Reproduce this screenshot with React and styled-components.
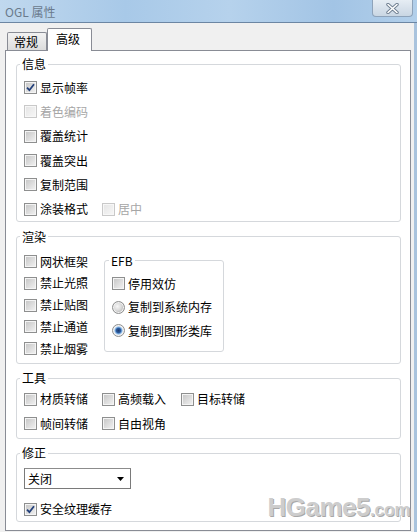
import React from 'react';
import styled, { createGlobalStyle } from 'styled-components';

const GlobalStyle = createGlobalStyle`
  html, body {
    margin: 0;
    padding: 0;
    background: #f0f0f0;
  }
  body {
    font-family: "Noto Sans CJK SC", "Noto Sans", sans-serif;
    font-size: 12px;
    color: #000;
  }
`;

const Window = styled.div`
  width: 417px;
  height: 532px;
  overflow: hidden;
  display: flex;
  flex-direction: column;
  background: #f0f0f0;
`;

const TitleBar = styled.div`
  height: 23px;
  flex: none;
  box-sizing: border-box;
  display: flex;
  justify-content: space-between;
  align-items: flex-start;
  padding-right: 4px;
  background: linear-gradient(to right, #c0d8ee 0%, #a8c9e8 30%, #b6d2ec 55%, #a2c4e5 80%, #b2cfea 100%);
  border-bottom: 1px solid #6c86a3;
`;

const Caption = styled.span`
  padding: 4px 0 0 5px;
  line-height: 15px;
  font-size: 12px;
  color: #6a7a8c;
  font-family: "Noto Sans CJK SC", "Noto Sans", sans-serif;
`;

const CloseButton = styled.div`
  width: 41px;
  height: 17px;
  box-sizing: border-box;
  display: flex;
  align-items: center;
  justify-content: center;
  border: 1px solid #8ea3ba;
  border-top: none;
  border-radius: 0 0 4px 4px;
  background: linear-gradient(to bottom, #e6edf4, #c9d6e3);
`;

const Body = styled.div`
  flex: 1;
  display: flex;
  flex-direction: column;
  border-right: 3px solid #a9c3dd;
`;

const TabRow = styled.div`
  display: flex;
  align-items: flex-end;
  padding: 5px 0 0 7px;
  position: relative;
  z-index: 1;
`;

const Tab = styled.div`
  box-sizing: border-box;
  width: ${({ $w }) => $w}px;
  height: ${({ $active }) => ($active ? 23 : 18)}px;
  margin-bottom: ${({ $active }) => ($active ? -1 : 0)}px;
  padding-left: ${({ $active }) => ($active ? 8 : 6)}px;
  line-height: ${({ $active }) => ($active ? 20 : 17)}px;
  border: 1px solid #898c95;
  border-bottom: none;
  border-left: ${({ $active }) => ($active ? '1px solid #898c95' : '1px solid #898c95')};
  border-radius: 2px 2px 0 0;
  background: ${({ $active }) =>
    $active ? '#fff' : 'linear-gradient(to bottom, #f2f2f2, #dcdcdc)'};
`;

const Panel = styled.div`
  position: relative;
  margin-left: 5px;
  width: 406px;
  box-sizing: border-box;
  border: 1px solid #898c95;
  background: #fff;
  padding: 6px 9px 8px 10px;
  display: flex;
  flex-direction: column;
  gap: 7.5px;
`;

const Group = styled.fieldset`
  margin: 0;
  min-width: 0;
  border: 1px solid #d5d8dc;
  border-radius: 3px;
  padding: ${({ $pad }) => $pad};
`;

const Legend = styled.legend`
  padding: 0 2px;
  margin-left: ${({ $ml }) => $ml ?? -4}px;
  line-height: 14px;
  font-size: 12px;
`;

const Option = styled.label`
  display: flex;
  align-items: center;
  gap: 3px;
  height: ${({ $h }) => $h}px;
  width: ${({ $w }) => ($w ? `${$w}px` : 'auto')};
  flex: none;
  white-space: nowrap;
  color: ${({ $disabled }) => ($disabled ? '#a6a6a6' : '#000')};
  line-height: 14px;
`;

const Box = styled.span`
  width: 13px;
  height: 13px;
  box-sizing: border-box;
  flex: none;
  display: flex;
  align-items: center;
  justify-content: center;
  border: 1px solid ${({ $disabled }) => ($disabled ? '#c9c9c9' : '#8e8f8f')};
  box-shadow: inset 0 0 0 1px ${({ $disabled }) => ($disabled ? '#f7f7f7' : '#f4f4f4')};
  background: ${({ $disabled }) =>
    $disabled
      ? 'linear-gradient(135deg, #e4e4e4, #f7f7f7)'
      : 'linear-gradient(135deg, #c4c4c4, #f3f3f3)'};
`;

const Round = styled.span`
  width: 13px;
  height: 13px;
  box-sizing: border-box;
  flex: none;
  border-radius: 50%;
  border: 1px solid #8e8f8f;
  background: ${({ $on }) =>
    $on
      ? 'radial-gradient(circle at 50% 50%, #1b3b70 0, #2c5a9c 2.2px, #7eb1e4 3.4px, #dfe8f1 4.4px, #f4f4f4 5.5px)'
      : 'radial-gradient(circle at 40% 40%, #f8f8f8 0, #d9d9d9 4px, #c4c4c4 5.5px)'};
  box-shadow: inset 0 0 0 1px #f2f2f2;
`;

const Row = styled.div`
  display: flex;
  align-items: center;
`;

const Column = styled.div`
  display: flex;
  flex-direction: column;
  padding-top: ${({ $pt }) => $pt || 0}px;
  width: ${({ $w }) => ($w ? `${$w}px` : 'auto')};
  flex: none;
`;

const SubGroup = styled(Group)`
  width: 120px;
  box-sizing: border-box;
  margin-top: 10px;
  flex: none;
`;

const Combo = styled.div`
  width: 107px;
  height: 21px;
  box-sizing: border-box;
  border: 1px solid #7a7a7a;
  border-top-color: #8c8c8c;
  background: #fff;
  display: flex;
  align-items: center;
  justify-content: space-between;
  padding: 0 6px 0 3px;
  line-height: 14px;
`;

const Watermark = styled.div`
  position: absolute;
  right: 0;
  bottom: 10px;
  display: flex;
  align-items: baseline;
  font-family: "Liberation Sans", Arial, sans-serif;
  font-weight: bold;
  color: #cdcdcd;
  text-shadow: -1px -1px 0 #ffffff, 1px 1px 0 #a8a8a8;
  pointer-events: none;
`;

const MarkBig = styled.span`
  font-size: 26px;
  line-height: 26px;
  letter-spacing: -0.5px;
`;

const MarkSmall = styled.span`
  font-size: 18px;
  line-height: 18px;
  letter-spacing: -0.5px;
`;

function Check({ label, checked, disabled, h, w }) {
  return (
    <Option $h={h} $w={w} $disabled={disabled}>
      <Box $disabled={disabled}>
        {checked && (
          <svg width="9" height="9" viewBox="0 0 9 9">
            <path d="M1 4.6 L3.4 7.2 L8 1.2" fill="none" stroke="#23407a" strokeWidth="1.8" />
          </svg>
        )}
      </Box>
      {label}
    </Option>
  );
}

function Radio({ label, on, h }) {
  return (
    <Option $h={h}>
      <Round $on={on} />
      {label}
    </Option>
  );
}

export default function App() {
  return (
    <Window>
      <GlobalStyle />
      <TitleBar>
        <Caption>OGL 属性</Caption>
        <CloseButton>
          <svg width="15" height="11" viewBox="0 0 15 11">
            <path d="M3 1.5 L12 9.5 M12 1.5 L3 9.5" stroke="#6e7e90" strokeWidth="3.4" strokeLinecap="round" />
            <path d="M3 1.5 L12 9.5 M12 1.5 L3 9.5" stroke="#ffffff" strokeWidth="1.6" strokeLinecap="round" />
          </svg>
        </CloseButton>
      </TitleBar>
      <Body>
        <TabRow>
          <Tab $w={40}>常规</Tab>
          <Tab $w={45} $active>高级</Tab>
        </TabRow>
        <Panel>
          <Group $pad="4.5px 7px 0">
            <Legend>信息</Legend>
            <Column>
              <Check h={24.3} label="显示帧率" checked />
              <Check h={24.3} label="着色编码" disabled />
              <Check h={24.3} label="覆盖统计" />
              <Check h={24.3} label="覆盖突出" />
              <Check h={24.3} label="复制范围" />
              <Row>
                <Check h={24.3} w={78} label="涂装格式" />
                <Check h={24.3} label="居中" disabled />
              </Row>
            </Column>
          </Group>

          <Group $pad="0 7px 3px">
            <Legend>渲染</Legend>
            <Row style={{ alignItems: 'flex-start' }}>
              <Column $pt={7} $w={80}>
                <Check h={21.75} label="网状框架" />
                <Check h={21.75} label="禁止光照" />
                <Check h={21.75} label="禁止贴图" />
                <Check h={21.75} label="禁止通道" />
                <Check h={21.75} label="禁止烟雾" />
              </Column>
              <SubGroup $pad="4px 7px 9px">
                <Legend $ml={-3}>EFB</Legend>
                <Check h={23.5} label="停用效仿" />
                <Radio h={23.5} label="复制到系统内存" />
                <Radio h={23.5} label="复制到图形类库" on />
              </SubGroup>
            </Row>
          </Group>

          <Group $pad="2px 7px 1.5px">
            <Legend>工具</Legend>
            <Row>
              <Check h={24.5} w={78} label="材质转储" />
              <Check h={24.5} w={79} label="高频载入" />
              <Check h={24.5} label="目标转储" />
            </Row>
            <Row>
              <Check h={24.5} w={78} label="帧间转储" />
              <Check h={24.5} label="自由视角" />
            </Row>
          </Group>

          <Group $pad="8px 7px 0">
            <Legend>修正</Legend>
            <Combo>
              <span>关闭</span>
              <svg width="7" height="4" viewBox="0 0 7 4">
                <path d="M0 0 H7 L3.5 4 Z" fill="#000" />
              </svg>
            </Combo>
            <Column $pt={8}>
              <Check h={24} label="安全纹理缓存" checked />
            </Column>
          </Group>

          <Watermark>
            <MarkBig>HGame5</MarkBig>
            <MarkSmall>.com</MarkSmall>
          </Watermark>
        </Panel>
      </Body>
    </Window>
  );
}
